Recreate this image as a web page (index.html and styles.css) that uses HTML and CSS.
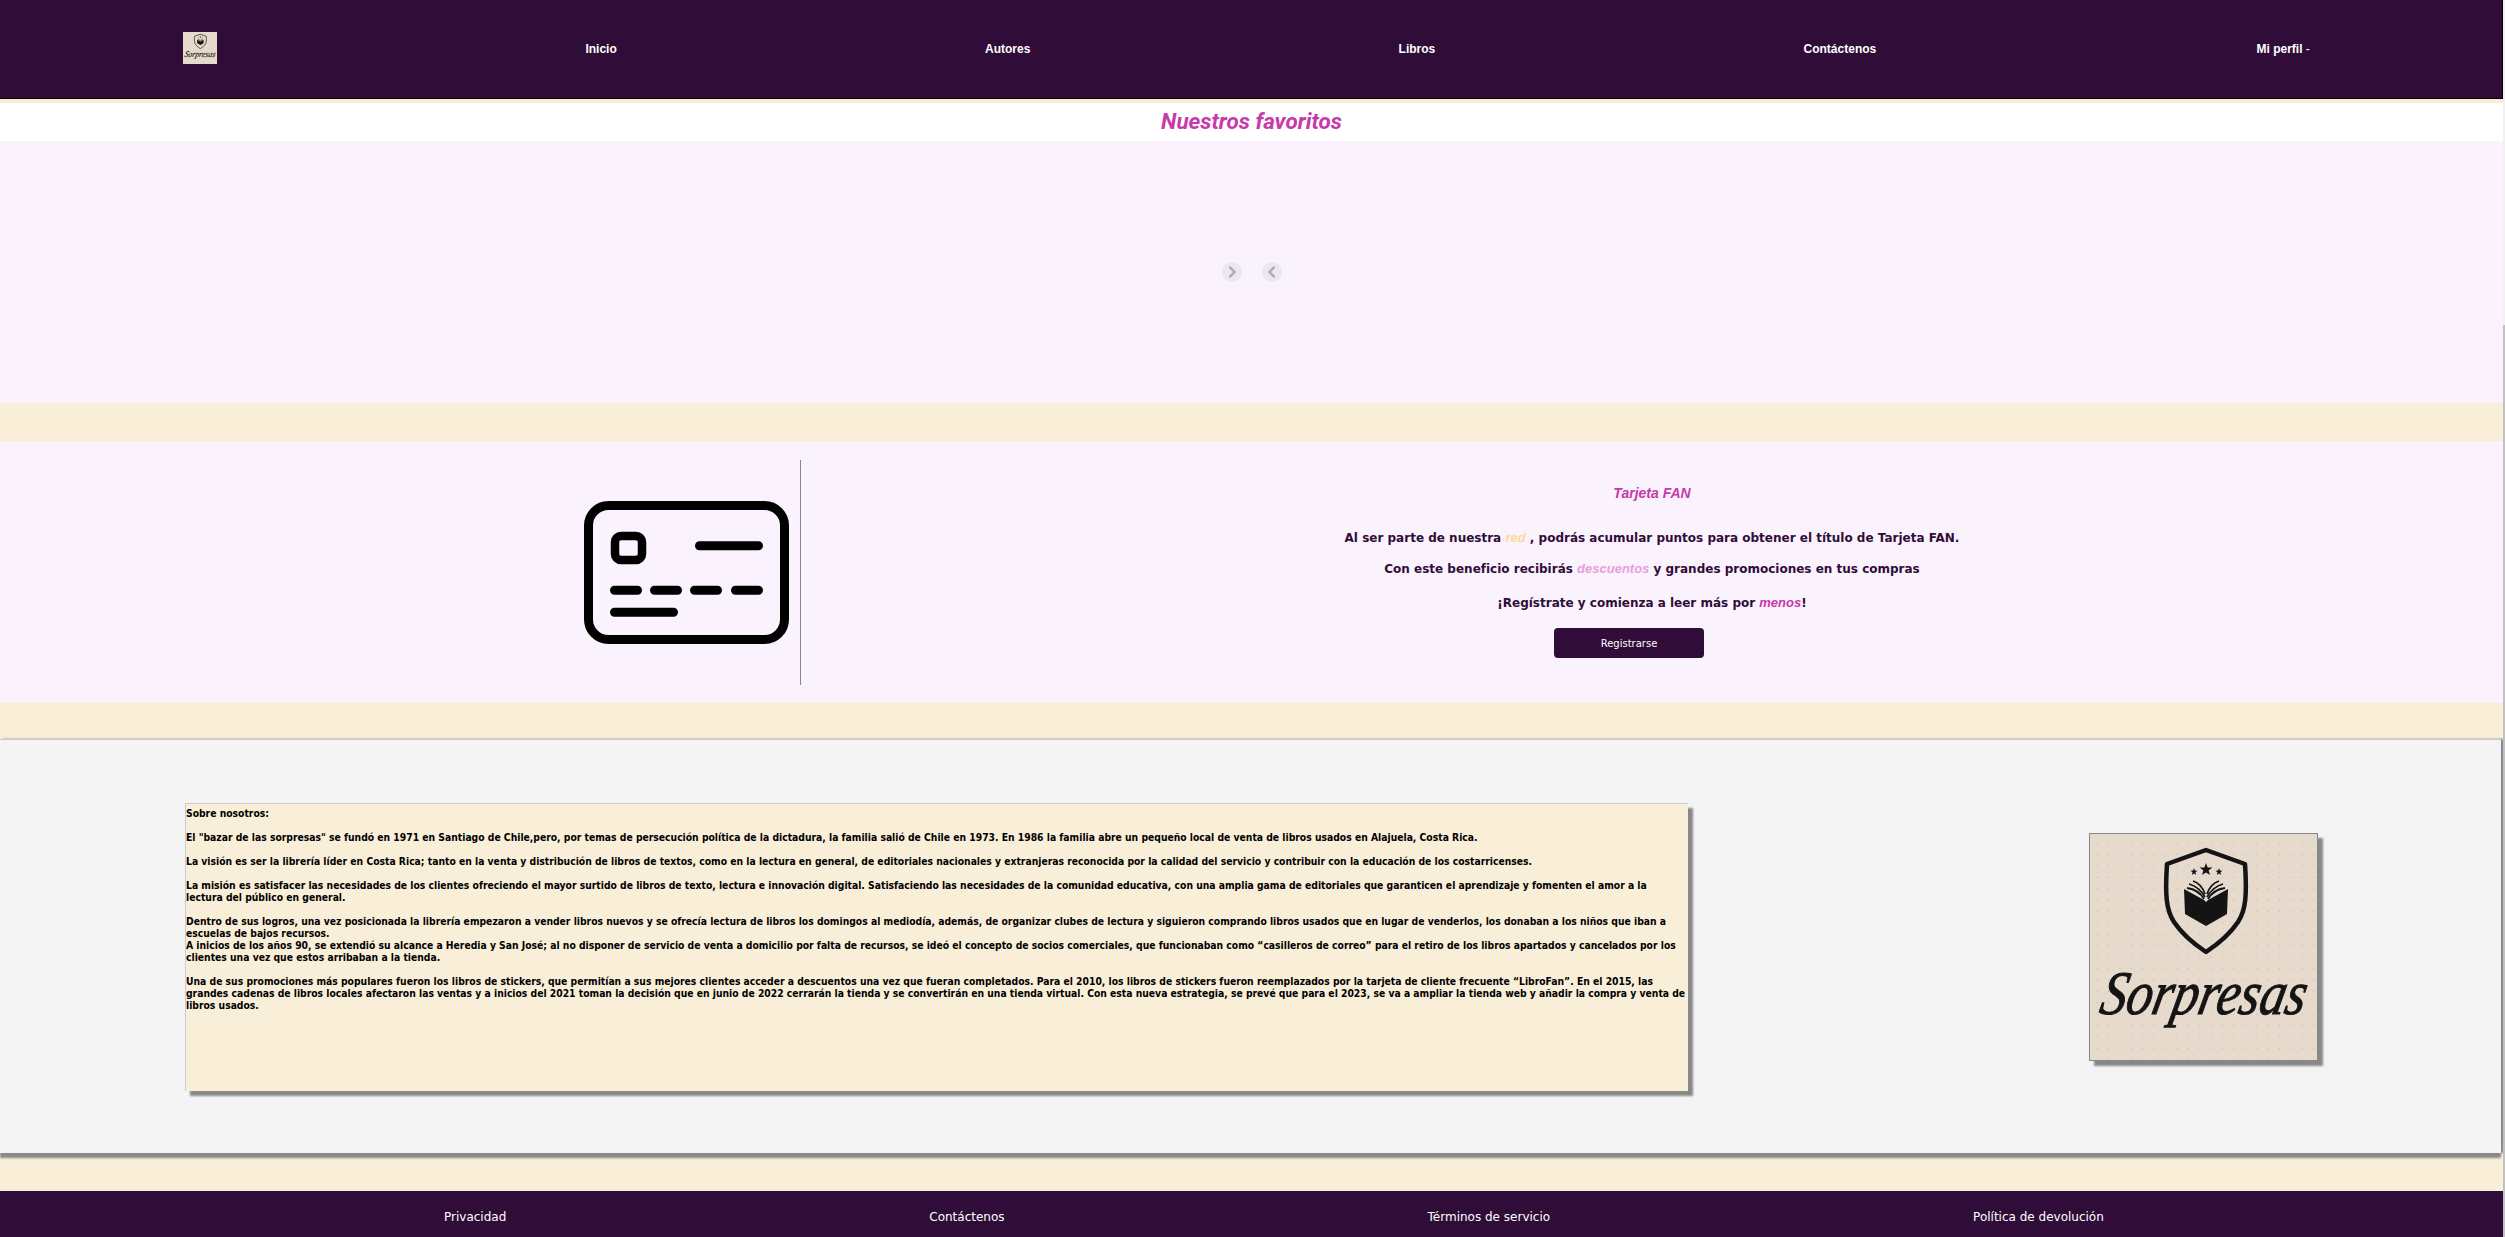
FILE: index.html
```html
<!DOCTYPE html>
<html lang="es">
<head>
    <meta charset="UTF-8">
    <meta name="viewport" content="width=device-width, initial-scale=1.0">
    <title>Sorpresas</title>
    <link rel="stylesheet" href="styles.css">
</head>
<body>
    <svg class="defs" width="0" height="0">
        <defs>
            <pattern id="puntos" width="11.4" height="11.4" patternUnits="userSpaceOnUse" x="2" y="4">
                <circle cx="5" cy="5" r="0.5" fill="#a89f94"/>
            </pattern>
            <symbol id="logo" viewBox="0 0 227 226" preserveAspectRatio="none">
                <rect width="227" height="226" fill="#e6dacd"/>
                <rect width="227" height="226" fill="url(#puntos)"/>
                <path d="M116 16 L155 30 C157 60 156 76 148 88 C140 100 128 110 116 118 C104 110 92 100 84 88 C76 76 75 60 77 30 Z" fill="none" stroke="#141414" stroke-width="4.5" stroke-linejoin="round"/>
                <polygon points="116,29 117.6,33.4 122.4,33.6 118.6,36.5 120,41 116,38.4 112,41 113.4,36.5 109.6,33.6 114.4,33.4" fill="#141414"/>
                <polygon points="104,34 104.9,36.6 107.6,36.7 105.4,38.3 106.2,41 104,39.4 101.8,41 102.6,38.3 100.4,36.7 103.1,36.6" fill="#141414"/>
                <polygon points="129,34 129.9,36.6 132.6,36.7 130.4,38.3 131.2,41 129,39.4 126.8,41 127.6,38.3 125.4,36.7 128.1,36.6" fill="#141414"/>
                <path d="M94 55 L114 66 L116 68 L118 66 L138 55 L137 80 L116 92 L95 80 Z" fill="#141414"/>
                <path d="M99 50 C106 52 111 56 115 63 M97 54 C104 55 110 58 114 65 M103 47 C109 49 113 54 115 60 M133 50 C126 52 121 56 117 63 M135 54 C128 55 122 58 118 65 M129 47 C123 49 119 54 117 60" fill="none" stroke="#141414" stroke-width="1.8"/>
                <text class="logo-texto" transform="translate(8 180) skewX(-12)" textLength="205" lengthAdjust="spacingAndGlyphs">Sorpresas</text>
            </symbol>
        </defs>
    </svg>

    <div class="pagina">
        <header class="cabecera">
            <svg class="logo-chico"><use href="#logo"/></svg>
            <a href="#">Inicio</a>
            <a href="#">Autores</a>
            <a href="#">Libros</a>
            <a href="#">Contáctenos</a>
            <a class="perfil" href="#">Mi perfil <span class="flecha">-</span></a>
        </header>

        <h1 class="titulo">Nuestros favoritos</h1>

        <section class="carrusel">
            <button class="flecha-btn" aria-label="Siguiente">
                <svg width="20" height="20" viewBox="0 0 20 20"><path d="M7.5 4.8 L12.6 10 L7.5 15.2" fill="none" stroke="#aca8b0" stroke-width="2.4"/></svg>
            </button>
            <button class="flecha-btn" aria-label="Anterior">
                <svg width="20" height="20" viewBox="0 0 20 20"><path d="M12.5 4.8 L7.4 10 L12.5 15.2" fill="none" stroke="#aca8b0" stroke-width="2.4"/></svg>
            </button>
        </section>

        <section class="fan">
            <div class="fan-imagen">
                <svg width="205" height="143" viewBox="0 0 205 143" fill="none" stroke="#000" stroke-linecap="round">
                    <rect x="4.5" y="4.5" width="196" height="134" rx="20" stroke-width="9"/>
                    <rect x="31" y="35" width="27" height="24" rx="6" stroke-width="8.5"/>
                    <path d="M115.5 44.7 H174.5 M30.5 89.3 H53.5 M70.5 89.3 H93.5 M110.5 89.3 H133.5 M151.5 89.3 H174.5 M30.5 111.3 H89.5" stroke-width="9"/>
                </svg>
            </div>
            <div class="fan-texto">
                <h2>Tarjeta FAN</h2>
                <p class="linea-1">Al ser parte de nuestra <em class="c-red">red</em> , podrás acumular puntos para obtener el título de Tarjeta FAN.</p>
                <p class="linea-2">Con este beneficio recibirás <em class="c-desc">descuentos</em> y grandes promociones en tus compras</p>
                <p class="linea-3">¡Regístrate y comienza a leer más por <em class="c-menos">menos</em>!</p>
                <button class="registrarse">Registrarse</button>
            </div>
        </section>

        <section class="nosotros">
            <div class="nosotros-texto">
                Sobre nosotros:<br><br>
                El "bazar de las sorpresas" se fundó en 1971 en Santiago de Chile,pero, por temas de persecución política de la dictadura, la familia salió de Chile en 1973. En 1986 la familia abre un pequeño local de venta de libros usados en Alajuela, Costa Rica.<br><br>
                La visión es ser la librería líder en Costa Rica; tanto en la venta y distribución de libros de textos, como en la lectura en general, de editoriales nacionales y extranjeras reconocida por la calidad del servicio y contribuir con la educación de los costarricenses.<br><br>
                La misión es satisfacer las necesidades de los clientes ofreciendo el mayor surtido de libros de texto, lectura e innovación digital. Satisfaciendo las necesidades de la comunidad educativa, con una amplia gama de editoriales que garanticen el aprendizaje y fomenten el amor a la<br>
                lectura del público en general.<br><br>
                Dentro de sus logros, una vez posicionada la librería empezaron a vender libros nuevos y se ofrecía lectura de libros los domingos al mediodía, además, de organizar clubes de lectura y siguieron comprando libros usados que en lugar de venderlos, los donaban a los niños que iban a escuelas de bajos recursos.<br>
                A inicios de los años 90, se extendió su alcance a Heredia y San José; al no disponer de servicio de venta a domicilio por falta de recursos, se ideó el concepto de socios comerciales, que funcionaban como “casilleros de correo” para el retiro de los libros apartados y cancelados por los clientes una vez que estos arribaban a la tienda.<br><br>
                Una de sus promociones más populares fueron los libros de stickers, que permitían a sus mejores clientes acceder a descuentos una vez que fueran completados. Para el 2010, los libros de stickers fueron reemplazados por la tarjeta de cliente frecuente “LibroFan”. En el 2015, las grandes cadenas de libros locales afectaron las ventas y a inicios del 2021 toman la decisión que en junio de 2022 cerrarán la tienda y se convertirán en una tienda virtual. Con esta nueva estrategia, se prevé que para el 2023, se va a ampliar la tienda web y añadir la compra y venta de libros usados.
            </div>
            <svg class="logo-grande"><use href="#logo"/></svg>
        </section>

        <footer class="pie">
            <a href="#">Privacidad</a>
            <a href="#">Contáctenos</a>
            <a href="#">Términos de servicio</a>
            <a href="#">Política de devolución</a>
        </footer>
    </div>

    <div class="barra"><div class="barra-pulgar"></div></div>
</body>
</html>
```

FILE: styles.css
```css
html, body {
    margin: 0;
    height: 100%;
    overflow: hidden;
}
body {
    background-color: #f9eed8;
    font-family: "DejaVu Sans", sans-serif;
}
.defs {
    position: absolute;
}
.pagina {
    width: 2503px;
}
.cabecera {
    display: flex;
    justify-content: space-around;
    align-items: center;
    height: 98px;
    margin-bottom: 4px;
    padding: 0 6px 0 3px;
    background-color: #300d38;
    border-bottom: 1px solid #000;
    border-right: 1px solid #000;
}
.cabecera a {
    color: white;
    text-decoration: none;
    font-family: "Liberation Sans", sans-serif;
    font-size: 12px;
    font-weight: bold;
}
.cabecera .perfil {
    padding: 0 2px 0 12px;
}
.flecha {
    font-weight: normal;
}
.logo-chico {
    width: 34px;
    height: 32px;
    margin: 0 0 2px -4px;
}
.logo-texto {
    font-family: "Liberation Serif", serif;
    font-style: italic;
    font-size: 62px;
    fill: #141414;
    stroke: #141414;
    stroke-width: 1px;
}
.titulo {
    height: 38px;
    margin: 0;
    background-color: white;
    color: #c73aa8;
    font-family: Roboto, sans-serif;
    font-size: 22.4px;
    font-style: italic;
    font-weight: bold;
    line-height: 36px;
    text-align: center;
}
.carrusel {
    display: flex;
    justify-content: center;
    align-items: center;
    gap: 20px;
    height: 262px;
    margin-bottom: 38px;
    background-color: #faf3fe;
}
.flecha-btn {
    width: 20px;
    height: 20px;
    padding: 0;
    border: none;
    border-radius: 50%;
    background-color: #ebe7ef;
}
.flecha-btn svg {
    display: block;
}
.fan {
    display: flex;
    height: 262px;
    margin-bottom: 36px;
    background-color: #faf3fe;
}
.fan-imagen {
    box-sizing: border-box;
    display: flex;
    align-items: center;
    justify-content: flex-end;
    width: 801px;
    height: 225px;
    margin-top: 19px;
    padding-right: 11px;
    border-right: 1px solid #888;
}
.fan-texto {
    flex: 1;
    padding-top: 44px;
    color: #300d38;
    font-size: 12px;
    font-weight: bold;
    text-align: center;
}
.fan-texto h2 {
    margin: 0;
    color: #c73aa8;
    font-family: "Liberation Sans", sans-serif;
    font-size: 14px;
    font-style: italic;
    line-height: 16px;
}
.fan-texto p {
    margin: 0;
    line-height: 16px;
}
.fan-texto em {
    font-family: "Liberation Sans", sans-serif;
    font-size: 13px;
}
.linea-1 { padding-top: 29px; }
.linea-2 { padding-top: 15px; }
.linea-3 { padding-top: 18px; }
.c-red { color: #ffd99a; }
.c-desc { color: #e8a0d8; }
.c-menos { color: #c73aa8; }
.registrarse {
    display: block;
    width: 150px;
    height: 30px;
    margin: 17px auto 0 753px;
    border: none;
    border-radius: 4px;
    background-color: #300d38;
    color: white;
    font-family: "DejaVu Sans", sans-serif;
    font-size: 10px;
}
.nosotros {
    display: flex;
    justify-content: space-between;
    align-items: center;
    box-sizing: border-box;
    height: 414px;
    width: 2501px;
    margin-bottom: 38px;
    padding: 0 183px 0 185px;
    background-color: #f4f4f4;
    border-top: 1px solid #ccc;
    box-shadow: 0 5px 2px #888, 3px 0 2px #888;
}
.nosotros-texto {
    box-sizing: border-box;
    width: 1503px;
    height: 288px;
    padding: 3px 0 0;
    background-color: #f9eed8;
    border: 1px solid #ccc;
    border-width: 1px 0 0 1px;
    box-shadow: 5px 5px 2px #888;
    color: #000;
    font-size: 10.27px;
    font-stretch: condensed;
    font-weight: bold;
    line-height: 12px;
}
.logo-grande {
    width: 227px;
    height: 226px;
    border: 1px solid #888;
    box-shadow: 5px 5px 2px #888;
}
.pie {
    display: flex;
    gap: 423px;
    align-items: center;
    height: 52px;
    padding-left: 444px;
    background-color: #300d38;
}
.pie a {
    color: white;
    text-decoration: none;
    font-size: 12px;
}
.barra {
    position: absolute;
    top: 0;
    right: 0;
    width: 2px;
    height: 100%;
    background-color: #f1f1f1;
}
.barra-pulgar {
    height: 912px;
    margin-top: 325px;
    background-color: #c1c1c1;
}
```
